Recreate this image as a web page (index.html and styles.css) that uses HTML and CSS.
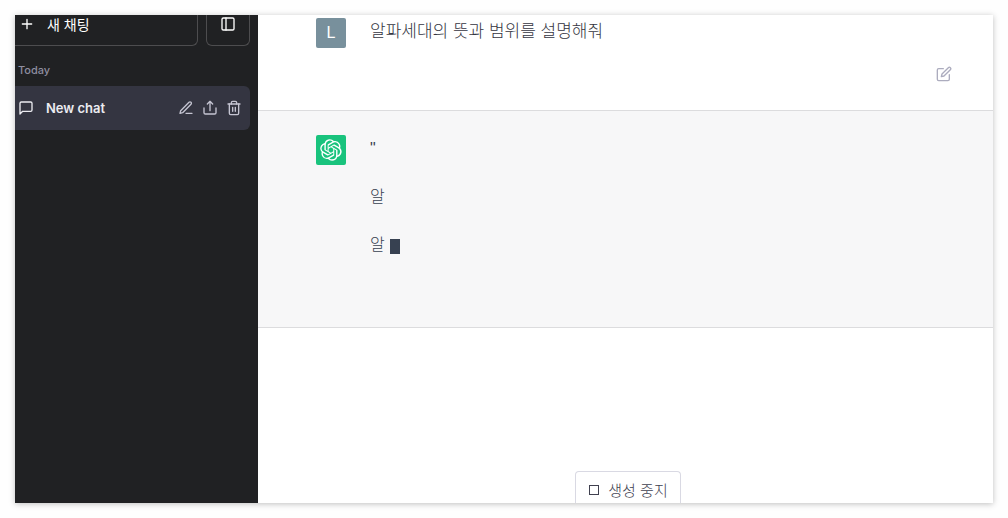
FILE: index.html
```html
<!DOCTYPE html>
<html lang="ko">
<head>
  <meta charset="UTF-8" />
  <meta name="viewport" content="width=device-width, initial-scale=1.0"/>
  <title>New chat</title>
  <link rel="stylesheet" href="styles.css">
</head>
<body>
  <div class="app">
    <nav class="sidebar">
      <div class="sidebar-top">
        <button type="button" class="new-chat">
          <svg class="icon" viewBox="0 0 24 24"><path d="M12 5v14M5 12h14"/></svg>
          새 채팅
        </button>
        <button type="button" class="toggle" aria-label="Hide sidebar">
          <svg class="icon" viewBox="0 0 24 24"><rect x="3" y="3" width="18" height="18" rx="2"/><path d="M9 3v18"/></svg>
        </button>
      </div>
      <h3 class="group-title">Today</h3>
      <div class="chat-item">
        <a href="#" class="chat-link">
          <svg class="icon" viewBox="0 0 24 24"><path d="M21 15a2 2 0 0 1-2 2H7l-4 4V5a2 2 0 0 1 2-2h14a2 2 0 0 1 2 2z"/></svg>
          New chat
        </a>
        <button type="button" class="icon-btn" aria-label="Rename">
          <svg class="icon" viewBox="0 0 24 24"><path d="M12 20h9"/><path d="M16.5 3.5a2.121 2.121 0 0 1 3 3L7 19l-4 1 1-4L16.5 3.5z"/></svg>
        </button>
        <button type="button" class="icon-btn" aria-label="Share">
          <svg class="icon" viewBox="0 0 24 24"><path d="M3 12v7a2 2 0 0 0 2 2h14a2 2 0 0 0 2-2v-7"/><path d="M16 6l-4-4-4 4M12 2v14"/></svg>
        </button>
        <button type="button" class="icon-btn" aria-label="Delete">
          <svg class="icon" viewBox="0 0 24 24"><path d="M3 6h18"/><path d="M19 6v14a2 2 0 0 1-2 2H7a2 2 0 0 1-2-2V6m3 0V4a2 2 0 0 1 2-2h4a2 2 0 0 1 2 2v2"/><path d="M10 11v6M14 11v6"/></svg>
        </button>
      </div>
    </nav>

    <main class="conversation">
      <section class="message user">
        <div class="avatar">L</div>
        <div class="text">
          <p>알파세대의 뜻과 범위를 설명해줘</p>
        </div>
        <button type="button" class="icon-btn edit" aria-label="Edit">
          <svg class="icon" viewBox="0 0 24 24"><path d="M11 4H4a2 2 0 0 0-2 2v14a2 2 0 0 0 2 2h14a2 2 0 0 0 2-2v-7"/><path d="M18.5 2.5a2.121 2.121 0 0 1 3 3L12 15l-4 1 1-4 9.5-9.5z"/></svg>
        </button>
      </section>

      <section class="message bot">
        <div class="avatar">
          <svg class="logo" viewBox="0 0 41 41"><path d="M37.532 16.87a9.963 9.963 0 0 0-.856-8.184 10.078 10.078 0 0 0-10.855-4.835A9.964 9.964 0 0 0 18.306.5a10.079 10.079 0 0 0-9.614 6.977 9.967 9.967 0 0 0-6.664 4.834 10.08 10.08 0 0 0 1.24 11.817 9.965 9.965 0 0 0 .856 8.185 10.079 10.079 0 0 0 10.855 4.835 9.965 9.965 0 0 0 7.516 3.35 10.078 10.078 0 0 0 9.617-6.981 9.967 9.967 0 0 0 6.663-4.834 10.079 10.079 0 0 0-1.243-11.813zM22.498 37.886a7.474 7.474 0 0 1-4.799-1.735c.061-.033.168-.091.237-.134l7.964-4.6a1.294 1.294 0 0 0 .655-1.134V19.054l3.366 1.944a.12.12 0 0 1 .066.092v9.299a7.505 7.505 0 0 1-7.49 7.496zM6.392 31.006a7.471 7.471 0 0 1-.894-5.023c.06.036.162.099.237.141l7.964 4.6a1.297 1.297 0 0 0 1.308 0l9.724-5.614v3.888a.12.12 0 0 1-.048.103l-8.051 4.649a7.504 7.504 0 0 1-10.24-2.744zM4.297 13.62A7.469 7.469 0 0 1 8.2 10.333c0 .068-.004.19-.004.274v9.201a1.294 1.294 0 0 0 .654 1.132l9.723 5.614-3.366 1.944a.12.12 0 0 1-.114.01L7.04 23.856a7.504 7.504 0 0 1-2.743-10.237zm27.658 6.437l-9.724-5.615 3.367-1.943a.121.121 0 0 1 .113-.01l8.052 4.648a7.498 7.498 0 0 1-1.158 13.528v-9.476a1.293 1.293 0 0 0-.65-1.132zm3.35-5.043c-.059-.037-.162-.099-.236-.141l-7.965-4.6a1.298 1.298 0 0 0-1.308 0l-9.723 5.614v-3.888a.12.12 0 0 1 .048-.103l8.05-4.645a7.497 7.497 0 0 1 11.135 7.763zm-21.063 6.929l-3.367-1.944a.12.12 0 0 1-.065-.092v-9.299a7.497 7.497 0 0 1 12.293-5.756 6.94 6.94 0 0 0-.236.134l-7.965 4.6a1.294 1.294 0 0 0-.654 1.132l-.006 11.225zm1.829-3.943l4.33-2.501 4.332 2.5v5l-4.331 2.5-4.331-2.5V18z"/></svg>
        </div>
        <div class="text">
          <p>"</p>
          <p>알</p>
          <p>알<span class="cursor"></span></p>
        </div>
      </section>

      <div class="footer">
        <button type="button" class="stop">
          <svg class="icon-small" viewBox="0 0 12 12"><rect x="1.5" y="1.5" width="9" height="9"/></svg>
          생성 중지
        </button>
      </div>
    </main>
  </div>
</body>
</html>
```
FILE: styles.css
```css
* {
  box-sizing: border-box;
}
body {
  font-family: "Liberation Sans", "Noto Sans CJK KR", sans-serif;
  background: #fefefe;
  height: 100vh;
  margin: 0;
  padding: 15px;
}
button {
  font-family: inherit;
  background: none;
  border: none;
  padding: 0;
  cursor: pointer;
}
p {
  margin: 0;
}
.icon {
  display: block;
  width: 16px;
  height: 16px;
  fill: none;
  stroke: currentColor;
  stroke-width: 2;
  stroke-linecap: round;
  stroke-linejoin: round;
}
.app {
  display: flex;
  height: 100%;
  overflow: hidden;
  background: white;
  box-shadow: 0 1px 6px rgba(0,0,0,0.25);
}

/* Sidebar */
.sidebar {
  flex: 0 0 243px;
  padding-right: 8px;
  background: #202123;
  color: #ececf1;
}
.sidebar-top {
  display: flex;
  gap: 8px;
}
.new-chat,
.toggle {
  display: flex;
  align-items: center;
  height: 31px;
  padding-bottom: 12px;
  border: 1px solid #4d4d4f;
  border-top: none;
  color: white;
}
.new-chat {
  flex: 1;
  gap: 12px;
  padding-left: 4px;
  border-left: none;
  border-radius: 0 0 6px 0;
  font-size: 14px;
}
.toggle {
  width: 44px;
  justify-content: center;
  border-radius: 0 0 6px 6px;
}
.group-title {
  margin: 16px 0 8px;
  padding-left: 3px;
  font-family: Inter, sans-serif;
  font-size: 11px;
  line-height: 16px;
  font-weight: 500;
  color: #8e8ea0;
}
.chat-item {
  display: flex;
  align-items: center;
  gap: 8px;
  height: 44px;
  padding: 0 8px 0 3px;
  background: #343541;
  border-radius: 0 6px 6px 0;
}
.chat-link {
  flex: 1;
  display: flex;
  align-items: center;
  gap: 12px;
  color: #ececf1;
  font-family: Inter, sans-serif;
  font-size: 13px;
  font-weight: 600;
  text-decoration: none;
}
.icon-btn {
  color: #c5c5d2;
}

/* Conversation */
.conversation {
  flex: 1;
  display: flex;
  flex-direction: column;
}
.message {
  display: flex;
  gap: 24px;
  padding: 24px 41px 24px 58px;
  border-bottom: 1px solid #dcdcde;
  font-size: 16px;
  line-height: 28px;
  color: #343541;
}
.message.user {
  height: 96px;
  padding-top: 3px;
  padding-bottom: 28px;
  font-size: 17px;
}
.message.bot {
  height: 217px;
  background: #f7f7f8;
  color: #374151;
}
.avatar {
  display: flex;
  justify-content: center;
  align-items: center;
  width: 30px;
  height: 30px;
  border-radius: 2px;
  background: #19c37d;
  color: white;
}
.user .avatar {
  background: #78909c;
  font-size: 16px;
}
.logo {
  width: 22px;
  height: 22px;
  fill: white;
}
.text {
  flex: 1;
  display: flex;
  flex-direction: column;
  gap: 20px;
  font-weight: 300;
}
.edit {
  align-self: flex-end;
  color: #acacbe;
}
.cursor {
  display: inline-block;
  width: 10px;
  height: 15px;
  margin-left: 5px;
  vertical-align: -4px;
  background: #374151;
}
.footer {
  display: flex;
  justify-content: center;
  margin-top: auto;
  padding-left: 5px;
}
.stop {
  display: flex;
  align-items: center;
  gap: 8px;
  height: 32px;
  padding: 4px 12px 0;
  border: 1px solid #d9d9e3;
  border-bottom: none;
  border-radius: 4px 4px 0 0;
  font-size: 15px;
  font-weight: 300;
  color: #40414f;
}
.icon-small {
  width: 12px;
  height: 12px;
  fill: none;
  stroke: currentColor;
}
```
